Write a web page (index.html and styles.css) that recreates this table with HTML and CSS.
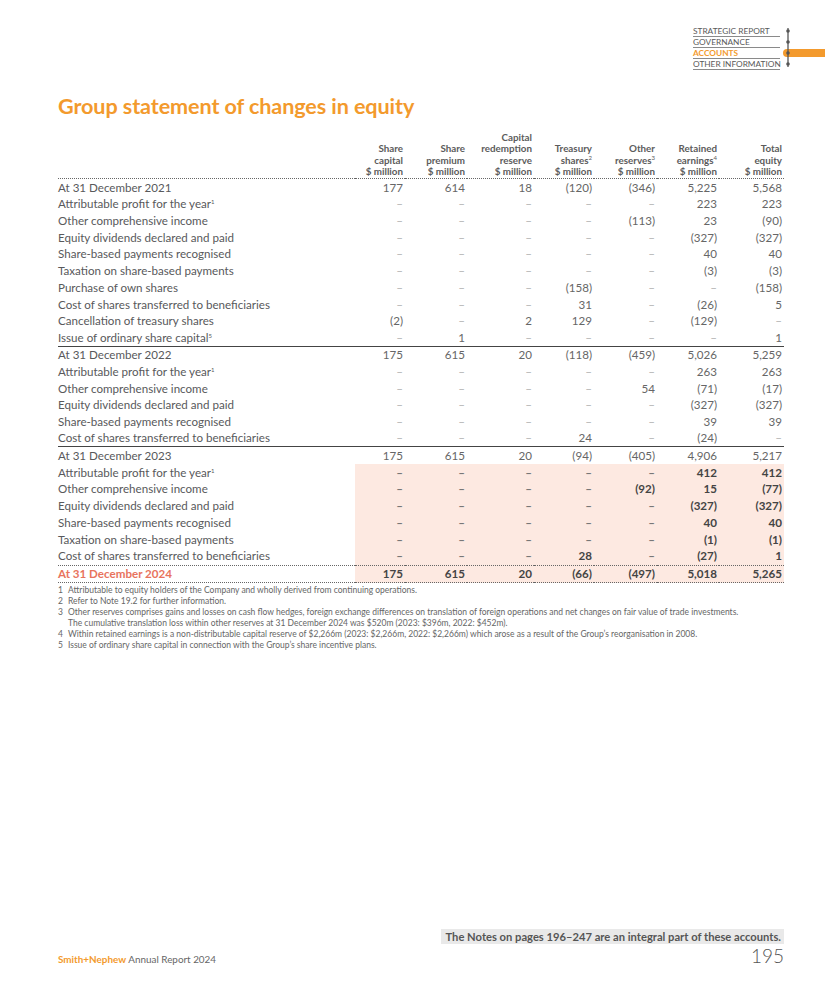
FILE: index.html
```html
<!DOCTYPE html>
<html lang="en">
<head>
<meta charset="utf-8">
<title>Group statement of changes in equity</title>
<link rel="stylesheet" href="styles.css">
</head>
<body>
<div class="page">
  <header class="top">
    <nav class="sections">
      <ul class="sections-list">
        <li>Strategic Report</li>
        <li>Governance</li>
        <li class="active">Accounts</li>
        <li>Other Information</li>
      </ul>
      <svg class="indicator" width="42" height="44" viewBox="0 0 42 44" aria-hidden="true">
        <rect x="0" y="23" width="50" height="8" rx="4" fill="#f39a2d"/>
        <line x1="5" y1="2" x2="5" y2="41" stroke="#555" stroke-width="1.3"/>
        <circle cx="5" cy="5" r="1.8" fill="#555"/>
        <circle cx="5" cy="16" r="1.8" fill="#555"/>
        <circle cx="5" cy="27" r="1.8" fill="#555"/>
        <circle cx="5" cy="38" r="1.8" fill="#555"/>
      </svg>
    </nav>
  </header>

  <h1 class="title">Group statement of changes in equity</h1>

  <table class="equity">
    <colgroup>
      <col class="c-label"><col class="c1"><col class="c2"><col class="c3"><col class="c4"><col class="c5"><col class="c6"><col class="c7">
    </colgroup>
    <thead>
      <tr>
        <th></th>
        <th>Share<br>capital<br>$ million</th>
        <th>Share<br>premium<br>$ million</th>
        <th>Capital<br>redemption<br>reserve<br>$ million</th>
        <th>Treasury<br>shares<sup>2</sup><br>$ million</th>
        <th>Other<br>reserves<sup>3</sup><br>$ million</th>
        <th>Retained<br>earnings<sup>4</sup><br>$ million</th>
        <th>Total<br>equity<br>$ million</th>
      </tr>
    </thead>
    <tbody>
      <tr><td>At 31 December 2021</td><td>177</td><td>614</td><td>18</td><td>(120)</td><td>(346)</td><td>5,225</td><td>5,568</td></tr>
      <tr><td>Attributable profit for the year<sup>1</sup></td><td class="d">–</td><td class="d">–</td><td class="d">–</td><td class="d">–</td><td class="d">–</td><td>223</td><td>223</td></tr>
      <tr><td>Other comprehensive income</td><td class="d">–</td><td class="d">–</td><td class="d">–</td><td class="d">–</td><td>(113)</td><td>23</td><td>(90)</td></tr>
      <tr><td>Equity dividends declared and paid</td><td class="d">–</td><td class="d">–</td><td class="d">–</td><td class="d">–</td><td class="d">–</td><td>(327)</td><td>(327)</td></tr>
      <tr><td>Share-based payments recognised</td><td class="d">–</td><td class="d">–</td><td class="d">–</td><td class="d">–</td><td class="d">–</td><td>40</td><td>40</td></tr>
      <tr><td>Taxation on share-based payments</td><td class="d">–</td><td class="d">–</td><td class="d">–</td><td class="d">–</td><td class="d">–</td><td>(3)</td><td>(3)</td></tr>
      <tr><td>Purchase of own shares</td><td class="d">–</td><td class="d">–</td><td class="d">–</td><td>(158)</td><td class="d">–</td><td class="d">–</td><td>(158)</td></tr>
      <tr><td>Cost of shares transferred to beneficiaries</td><td class="d">–</td><td class="d">–</td><td class="d">–</td><td>31</td><td class="d">–</td><td>(26)</td><td>5</td></tr>
      <tr><td>Cancellation of treasury shares</td><td>(2)</td><td class="d">–</td><td>2</td><td>129</td><td class="d">–</td><td>(129)</td><td class="d">–</td></tr>
      <tr class="rule"><td>Issue of ordinary share capital<sup>5</sup></td><td class="d">–</td><td>1</td><td class="d">–</td><td class="d">–</td><td class="d">–</td><td class="d">–</td><td>1</td></tr>
      <tr><td>At 31 December 2022</td><td>175</td><td>615</td><td>20</td><td>(118)</td><td>(459)</td><td>5,026</td><td>5,259</td></tr>
      <tr><td>Attributable profit for the year<sup>1</sup></td><td class="d">–</td><td class="d">–</td><td class="d">–</td><td class="d">–</td><td class="d">–</td><td>263</td><td>263</td></tr>
      <tr><td>Other comprehensive income</td><td class="d">–</td><td class="d">–</td><td class="d">–</td><td class="d">–</td><td>54</td><td>(71)</td><td>(17)</td></tr>
      <tr><td>Equity dividends declared and paid</td><td class="d">–</td><td class="d">–</td><td class="d">–</td><td class="d">–</td><td class="d">–</td><td>(327)</td><td>(327)</td></tr>
      <tr><td>Share-based payments recognised</td><td class="d">–</td><td class="d">–</td><td class="d">–</td><td class="d">–</td><td class="d">–</td><td>39</td><td>39</td></tr>
      <tr class="rule"><td>Cost of shares transferred to beneficiaries</td><td class="d">–</td><td class="d">–</td><td class="d">–</td><td>24</td><td class="d">–</td><td>(24)</td><td class="d">–</td></tr>
      <tr><td>At 31 December 2023</td><td>175</td><td>615</td><td>20</td><td>(94)</td><td>(405)</td><td>4,906</td><td>5,217</td></tr>
      <tr class="cur"><td>Attributable profit for the year<sup>1</sup></td><td class="d">–</td><td class="d">–</td><td class="d">–</td><td class="d">–</td><td class="d">–</td><td>412</td><td>412</td></tr>
      <tr class="cur"><td>Other comprehensive income</td><td class="d">–</td><td class="d">–</td><td class="d">–</td><td class="d">–</td><td>(92)</td><td>15</td><td>(77)</td></tr>
      <tr class="cur"><td>Equity dividends declared and paid</td><td class="d">–</td><td class="d">–</td><td class="d">–</td><td class="d">–</td><td class="d">–</td><td>(327)</td><td>(327)</td></tr>
      <tr class="cur"><td>Share-based payments recognised</td><td class="d">–</td><td class="d">–</td><td class="d">–</td><td class="d">–</td><td class="d">–</td><td>40</td><td>40</td></tr>
      <tr class="cur"><td>Taxation on share-based payments</td><td class="d">–</td><td class="d">–</td><td class="d">–</td><td class="d">–</td><td class="d">–</td><td>(1)</td><td>(1)</td></tr>
      <tr class="cur"><td>Cost of shares transferred to beneficiaries</td><td class="d">–</td><td class="d">–</td><td class="d">–</td><td>28</td><td class="d">–</td><td>(27)</td><td>1</td></tr>
      <tr class="cur total"><td>At 31 December 2024</td><td>175</td><td>615</td><td>20</td><td>(66)</td><td>(497)</td><td>5,018</td><td>5,265</td></tr>
    </tbody>
  </table>

  <div class="notes">
    <div class="note"><span class="num">1</span><span>Attributable to equity holders of the Company and wholly derived from continuing operations.</span></div>
    <div class="note"><span class="num">2</span><span>Refer to Note 19.2 for further information.</span></div>
    <div class="note"><span class="num">3</span><span>Other reserves comprises gains and losses on cash flow hedges, foreign exchange differences on translation of foreign operations and net changes on fair value of trade investments.<br>The cumulative translation loss within other reserves at 31 December 2024 was $520m (2023: $396m, 2022: $452m).</span></div>
    <div class="note"><span class="num">4</span><span>Within retained earnings is a non-distributable capital reserve of $2,266m (2023: $2,266m, 2022: $2,266m) which arose as a result of the Group’s reorganisation in 2008.</span></div>
    <div class="note"><span class="num">5</span><span>Issue of ordinary share capital in connection with the Group’s share incentive plans.</span></div>
  </div>

  <footer class="foot">
    <div class="integral"><span>The Notes on pages 196–247 are an integral part of these accounts.</span></div>
    <div class="foot-row">
      <div class="brand"><b>Smith+Nephew</b> Annual Report 2024</div>
      <div class="pageno">195</div>
    </div>
  </footer>
</div>
</body>
</html>
```

FILE: styles.css
```css
* { box-sizing: border-box; }
html, body { margin: 0; padding: 0; background: #fff; }
body {
  font-family: Lato, "Open Sans", "Liberation Sans", sans-serif;
  color: #58595b;
}
.page {
  width: 825px;
  height: 983px;
  display: flex;
  flex-direction: column;
  padding: 0 41px 0 58px;
}

/* top nav */
.top {
  display: flex;
  justify-content: flex-end;
  margin-right: -41px;
  padding-top: 26px;
}
.sections { display: flex; align-items: flex-start; }
.sections-list {
  list-style: none;
  margin: 0;
  padding: 0;
  width: 87px;
}
.sections-list li {
  font-size: 8.3px;
  line-height: 10px;
  height: 11px;
  text-transform: uppercase;
  color: #5a5a5a;
  border-bottom: 1px solid #8a8a8a;
  white-space: nowrap;
}
.sections-list li.active { color: #f39a2d; font-weight: 700; }
.indicator { display: block; margin-left: 3px; }

/* title */
.title {
  margin: 23px 0 0;
  font-size: 21.6px;
  line-height: 26px;
  font-weight: 700;
  color: #f39a2d;
  letter-spacing: -0.1px;
}

/* table */
.equity {
  margin-top: 13px;
  width: 726px;
  table-layout: fixed;
  border-collapse: separate;
  border-spacing: 0;
  font-size: 11.6px;
}
.c-label { width: 297px; }
.c1 { width: 50px; }
.c2 { width: 62px; }
.c3 { width: 67px; }
.c4 { width: 60px; }
.c5 { width: 63px; }
.c6 { width: 62px; }
.c7 { width: 65px; }

.equity th {
  font-size: 9.8px;
  line-height: 11.3px;
  font-weight: 700;
  color: #5c5c5c;
  text-align: right;
  vertical-align: bottom;
  padding: 0 2px 1px 0;
  border-bottom: 1px dotted #666;
}
.equity th sup, .equity td sup {
  font-size: 6px;
  line-height: 0;
  vertical-align: 4px;
  font-weight: 400;
}
.equity td {
  height: 16.74px;
  line-height: 16px;
  padding: 0 2px 0 0;
  text-align: right;
  color: #666;
  white-space: nowrap;
}
.equity td:first-child {
  text-align: left;
  color: #58595b;
  padding: 0;
}
.equity td.d { color: #b0b0b0; }
.equity tr.rule td { border-bottom: 1px solid #444; }

.equity tr.cur td:not(:first-child) {
  background: #fde9e1;
  font-weight: 700;
  color: #444;
}
.equity tr.cur td.d { color: #777; }
.equity tr.total td {
  border-top: 1px dotted #666;
  border-bottom: 1px dotted #666;
}
.equity tr.total td:first-child {
  color: #e8735d;
  font-weight: 700;
}

/* footnotes */
.notes { margin-top: 2px; }
.note {
  display: flex;
  font-size: 8.5px;
  line-height: 11px;
  color: #666;
}
.note .num { width: 10px; flex: none; }

/* footer */
.foot {
  margin-top: auto;
  padding-bottom: 17px;
}
.integral {
  display: flex;
  justify-content: flex-end;
}
.integral span {
  background: #e9e9e9;
  font-size: 11.2px;
  line-height: 15px;
  font-weight: 700;
  color: #555;
  padding: 0 3px 0 5px;
}
.foot-row {
  display: flex;
  justify-content: space-between;
  align-items: flex-end;
  margin-top: 2px;
}
.brand {
  font-size: 9.9px;
  line-height: 12px;
  color: #666;
  padding-bottom: 1px;
}
.brand b { color: #f39a2d; font-weight: 700; }
.pageno {
  font-size: 19px;
  line-height: 20px;
  font-weight: 300;
  color: #555;
}
```
